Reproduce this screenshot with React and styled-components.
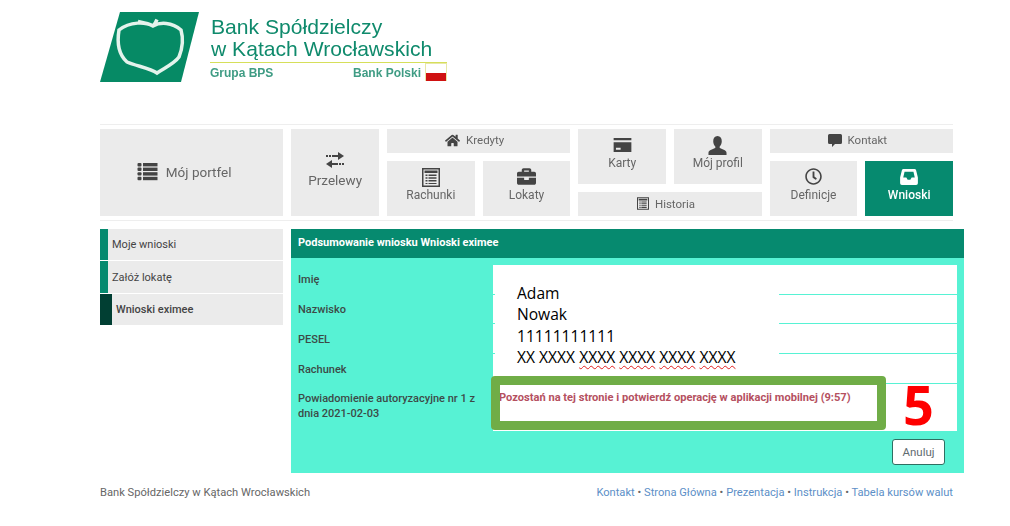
import styled, { createGlobalStyle } from 'styled-components';
import { FaHome, FaBriefcase, FaRegClock } from 'react-icons/fa';

const GlobalStyle = createGlobalStyle`
  html, body {
    margin: 0;
    padding: 0;
    background: #fff;
    font-family: Roboto, "Liberation Sans", sans-serif;
  }
`;

// page frame
const Page = styled.div`
  width: 1010px;
  height: 526px;
  box-sizing: border-box;
  padding: 12px 46px 0 100px;
  overflow: hidden;
`;

// logo
const Brand = styled.header`
  display: flex;
  height: 70px;
  gap: 10px;
  filter: blur(0.4px);
`;

const BrandText = styled.div`
  width: 237px;
  color: #0f8a6c;
  font-family: "Liberation Sans", Arial, sans-serif;
`;

const BrandName = styled.div`
  font-size: 21.1px;
  line-height: 21.5px;
  padding: 4px 0 0 1px;
  white-space: nowrap;
`;

const BrandFoot = styled.div`
  margin-top: 3px;
  border-top: 1px solid #d6df5a;
  display: flex;
  justify-content: space-between;
  align-items: flex-end;
  height: 18px;
  font-size: 12px;
  font-weight: 700;
  color: #3f9c84;
`;

const BrandGroup = styled.span`
  line-height: 16px;
`;

const BrandPoland = styled.span`
  display: flex;
  align-items: flex-end;
  gap: 4px;
  line-height: 16px;
`;

const Flag = styled.i`
  display: block;
  width: 22px;
  height: 18px;
  box-sizing: border-box;
  border: 1px solid #e8e8a8;
  border-bottom: 0;
  background: linear-gradient(#fff 0 55%, #cf1111 55% 100%);
`;

// main navigation
const Nav = styled.nav`
  width: 853px;
  margin-top: 42px;
  padding: 4px 0;
  border-top: 1px solid #eee;
  border-bottom: 1px solid #eee;
  display: grid;
  grid-template-columns: repeat(9, 1fr);
  grid-template-rows: repeat(3, 23.67px);
  gap: 8px;
  filter: blur(0.4px);
`;

const Tile = styled.a`
  grid-column: ${p => p.$col};
  grid-row: ${p => p.$row};
  background: ${p => (p.$active ? '#068a6f' : '#ebebeb')};
  color: ${p => (p.$active ? '#fff' : '#666')};
  font-size: ${p => p.$size || 12}px;
  font-weight: ${p => (p.$active ? 500 : 400)};
  line-height: 14px;
  display: flex;
  flex-direction: column;
  align-items: center;
  justify-content: flex-end;
  gap: ${p => p.$gap ?? 2}px;
  padding-bottom: ${p => p.$pb ?? 14}px;
  white-space: nowrap;

  & svg {
    color: ${p => (p.$active ? '#fff' : '#444')};
    flex: none;
    display: block;
  }
`;

// wide tile: icon beside the label, a bit left of the middle
const InlineTile = styled(Tile)`
  flex-direction: row;
  justify-content: center;
  gap: ${p => p.$gap ?? 6}px;
  padding-bottom: 1px;
  padding-right: ${p => p.$pr ?? 8}px;
`;

// content under the navigation
const Content = styled.div`
  display: flex;
  gap: 8px;
  margin-top: 8px;
`;

const Sidebar = styled.aside`
  width: 183px;
  flex: none;
  display: flex;
  flex-direction: column;
  gap: 1px;
`;

const SideItem = styled.a`
  height: 31.5px;
  background: #ebebeb;
  border-left: ${p => (p.$active ? '12px solid #013f33' : '8px solid #068a6f')};
  padding-left: 4px;
  display: flex;
  align-items: center;
  color: #444;
  font-size: 11px;
  font-weight: ${p => (p.$active ? 500 : 400)};
`;

const Panel = styled.main`
  width: 673px;
  height: 244px;
  background: #57f2d4;
`;

const PanelTitle = styled.h1`
  margin: 0;
  height: 29px;
  padding-left: 7px;
  background: #068a6f;
  color: #fff;
  font-size: 11px;
  font-weight: 700;
  line-height: 28px;
`;

const Summary = styled.div`
  position: relative;
  margin-top: 7px;
`;

const Row = styled.div`
  display: flex;
  height: ${p => p.$height || 29.75}px;
`;

const Label = styled.div`
  width: 202px;
  flex: none;
  box-sizing: border-box;
  padding: ${p => (p.$tall ? '7px 10px 0 7px' : '7.4px 0 0 7px')};
  color: #3d4a47;
  font-size: 11px;
  font-weight: 500;
  line-height: 15px;
`;

const Value = styled.div`
  width: 464px;
  box-sizing: border-box;
  background: #fff;
  border-bottom: ${p => (p.$last ? 'none' : '1px solid #57f2d4')};
`;

const Notice = styled.div`
  padding: 7px 0 0 6px;
  color: #b5505f;
  font-size: 11.1px;
  font-weight: 700;
  line-height: 13px;
  white-space: nowrap;
`;

// pasted over the screenshot: white patch with the filled in data
const DataPatch = styled.div`
  position: absolute;
  left: 204px;
  top: 0;
  width: 284px;
  height: 111px;
  box-sizing: border-box;
  padding: 18px 0 0 22px;
  background: #fff;
  color: #000;
  font-family: "Open Sans", sans-serif;
  font-size: 15.6px;
  line-height: 21.3px;
  white-space: nowrap;
`;

const Misspelled = styled.span`
  text-decoration: underline wavy #e02020 1px;
  text-underline-offset: 2px;
  text-decoration-skip-ink: none;
`;

const Highlight = styled.div`
  position: absolute;
  left: 200px;
  top: 111px;
  width: 395px;
  height: 54px;
  box-sizing: border-box;
  border: 9px solid #70ad47;
  border-radius: 4px;
  pointer-events: none;
`;

const StepNumber = styled.div`
  position: absolute;
  left: 612px;
  top: 104px;
  color: #fe0000;
  font-family: "Open Sans", sans-serif;
  font-size: 54px;
  font-weight: 700;
  line-height: 70px;
`;

const PanelActions = styled.div`
  display: flex;
  justify-content: flex-end;
  padding: 8px 19px 0 0;
`;

const CancelButton = styled.button`
  width: 53px;
  height: 26px;
  padding: 0;
  box-sizing: border-box;
  background: #fff;
  border: 1px solid #2f6f62;
  border-radius: 3px;
  color: #5f6b70;
  font-family: Roboto, sans-serif;
  font-size: 11.5px;
`;

const Footer = styled.footer`
  width: 853px;
  margin-top: 13px;
  display: flex;
  justify-content: space-between;
  font-size: 11.15px;
  line-height: 14px;
  color: #666;
`;

const FooterLinks = styled.div`
  color: #666;
  & a {
    color: #5c8fc7;
  }
`;

// icons
const ListIcon = () => (
  <svg width="21" height="19" viewBox="0 0 20 19" fill="currentColor">
    <rect y="1" width="4" height="3.4" rx="1" /><rect x="5.5" y="1" width="14.5" height="3.4" />
    <rect y="5.6" width="4" height="3.4" rx="1" /><rect x="5.5" y="5.6" width="14.5" height="3.4" />
    <rect y="10.2" width="4" height="3.4" rx="1" /><rect x="5.5" y="10.2" width="14.5" height="3.4" />
    <rect y="14.8" width="4" height="3.4" rx="1" /><rect x="5.5" y="14.8" width="14.5" height="3.4" />
  </svg>
);

const TransferIcon = () => (
  <svg width="20" height="16" viewBox="0 0 20 16" fill="currentColor">
    <path d="M1 3h2v2H1zM4 3h2v2H4zM7 3h6V0l6 4-6 4V5H7zM19 11h-2v2h2zM16 11h-2v2h2zM13 11H7V8l-6 4 6 4v-3h6z" />
  </svg>
);

const LedgerIcon = ({ size = 18 }) => (
  <svg width={size} height={size + 1} viewBox="0 0 18 19" fill="currentColor">
    <path fillRule="evenodd" d="M0 0h18v19H0zM1.500 1.500v16h15v-16z" />
    <path d="M2.500 2.500h13v2.500h-13z" />
    <path d="M3.500 6.500h2v1.400h-2zM6.500 6.500h8v1.400h-8zM3.500 9.300h2v1.400h-2zM6.500 9.300h8v1.400h-8zM3.500 12.100h2v1.400h-2zM6.500 12.100h8v1.400h-8zM3.500 14.900h2v1.200h-2zM6.500 14.900h8v1.200h-8z" />
  </svg>
);

const CardIcon = () => (
  <svg width="19" height="14" viewBox="0 0 19 15" fill="currentColor">
    <path fillRule="evenodd" d="M0 0h19v2.500H0zM0 4.500h19V15H0zM2.500 10.500v2h5v-2z" />
  </svg>
);

const UserIcon = () => (
  <svg width="19" height="19" viewBox="0 0 19 20" fill="currentColor">
    <path d="M9.500 0C12.500 0 14 2.300 14 5.500c0 2.300-.9 4.300-2.200 5.500v1.500c1.800.9 7.200 2.200 7.200 5V20H0v-2.500c0-2.800 5.400-4.100 7.200-5V11C5.900 9.800 5 7.800 5 5.500 5 2.300 6.500 0 9.500 0z" />
  </svg>
);

const CommentIcon = () => (
  <svg width="14" height="13" viewBox="0 0 14 13" fill="currentColor">
    <path d="M1.500 0h11A1.500 1.500 0 0 1 14 1.500v7a1.500 1.500 0 0 1-1.500 1.500H7l-3 3v-3H1.500A1.500 1.500 0 0 1 0 8.500v-7A1.500 1.500 0 0 1 1.500 0z" />
  </svg>
);

const InboxIcon = () => (
  <svg width="20" height="16" viewBox="0 0 20 18" fill="currentColor">
    <path fillRule="evenodd" d="M4 0h12a2 2 0 0 1 2 1.500l2 8V16a2 2 0 0 1-2 2H2a2 2 0 0 1-2-2V9.500l2-8A2 2 0 0 1 4 0zM5 3 3.500 9.500H7l1.500 2.500h3L13 9.500h3.500L15 3z" />
  </svg>
);

const ShieldLogo = () => (
  <svg width="100" height="70" viewBox="0 0 100 70">
    <polygon points="20,0 99,0 81,70 0,70" fill="#068a65" />
    <path
      d="M53 14C46 10 30 9 19 18C17 30 18 42 27 50C36 54 50 56 57 61C64 56 74 52 79 45C83 35 83 25 81 18C72 10 60 10 53 14C50 12 46 11 38 9.500M53 14C55 12 56 10 57 7.500"
      fill="none"
      stroke="#e4f3ec"
      strokeWidth="3.500"
    />
  </svg>
);

const App = () => {
  return (
    <Page>
      <GlobalStyle />
      <Brand>
        <ShieldLogo />
        <BrandText>
          <BrandName>Bank Spółdzielczy<br />w Kątach Wrocławskich</BrandName>
          <BrandFoot>
            <BrandGroup>Grupa BPS</BrandGroup>
            <BrandPoland>Bank Polski<Flag /></BrandPoland>
          </BrandFoot>
        </BrandText>
      </Brand>

      <Nav>
        <InlineTile $col="1 / span 2" $row="1 / span 3" $size={13.5} $gap={8} $pr={15}><ListIcon />Mój portfel</InlineTile>
        <Tile $col="3" $row="1 / span 3" $size={13.5} $gap={5} $pb={29}><TransferIcon />Przelewy</Tile>
        <InlineTile $col="4 / span 2" $row="1" $size={11.5}><FaHome size={15} />Kredyty</InlineTile>
        <Tile $col="4" $row="2 / span 2" $gap={1}><LedgerIcon />Rachunki</Tile>
        <Tile $col="5" $row="2 / span 2"><FaBriefcase size={19} />Lokaty</Tile>
        <Tile $col="6" $row="1 / span 2" $gap={4}><CardIcon />Karty</Tile>
        <Tile $col="7" $row="1 / span 2" $gap={1}><UserIcon />Mój profil</Tile>
        <InlineTile $col="6 / span 2" $row="3" $size={11.5}><LedgerIcon size={12} />Historia</InlineTile>
        <InlineTile $col="8 / span 2" $row="1" $size={11.5}><CommentIcon />Kontakt</InlineTile>
        <Tile $col="8" $row="2 / span 2" $gap={3}><FaRegClock size={17} />Definicje</Tile>
        <Tile $col="9" $row="2 / span 2" $gap={3} $active><InboxIcon />Wnioski</Tile>
      </Nav>

      <Content>
        <Sidebar>
          <SideItem>Moje wnioski</SideItem>
          <SideItem>Załóż lokatę</SideItem>
          <SideItem $active>Wnioski eximee</SideItem>
        </Sidebar>

        <Panel>
          <PanelTitle>Podsumowanie wniosku Wnioski eximee</PanelTitle>
          <Summary>
            <Row><Label>Imię</Label><Value /></Row>
            <Row><Label>Nazwisko</Label><Value /></Row>
            <Row><Label>PESEL</Label><Value /></Row>
            <Row><Label>Rachunek</Label><Value /></Row>
            <Row $height={47}>
              <Label $tall>Powiadomienie autoryzacyjne nr 1 z dnia 2021-02-03</Label>
              <Value $last>
                <Notice>Pozostań na tej stronie i potwierdź operację w aplikacji mobilnej (9:57)</Notice>
              </Value>
            </Row>
            <DataPatch>
              Adam<br />
              Nowak<br />
              11111111111<br />
              XX XXXX <Misspelled>XXXX</Misspelled> <Misspelled>XXXX</Misspelled> <Misspelled>XXXX</Misspelled> <Misspelled>XXXX</Misspelled>
            </DataPatch>
            <Highlight />
            <StepNumber>5</StepNumber>
          </Summary>
          <PanelActions>
            <CancelButton>Anuluj</CancelButton>
          </PanelActions>
        </Panel>
      </Content>

      <Footer>
        <span>Bank Spółdzielczy w Kątach Wrocławskich</span>
        <FooterLinks>
          <a>Kontakt</a> • <a>Strona Główna</a> • <a>Prezentacja</a> • <a>Instrukcja</a> • <a>Tabela kursów walut</a>
        </FooterLinks>
      </Footer>
    </Page>
  );
};

export default App;
